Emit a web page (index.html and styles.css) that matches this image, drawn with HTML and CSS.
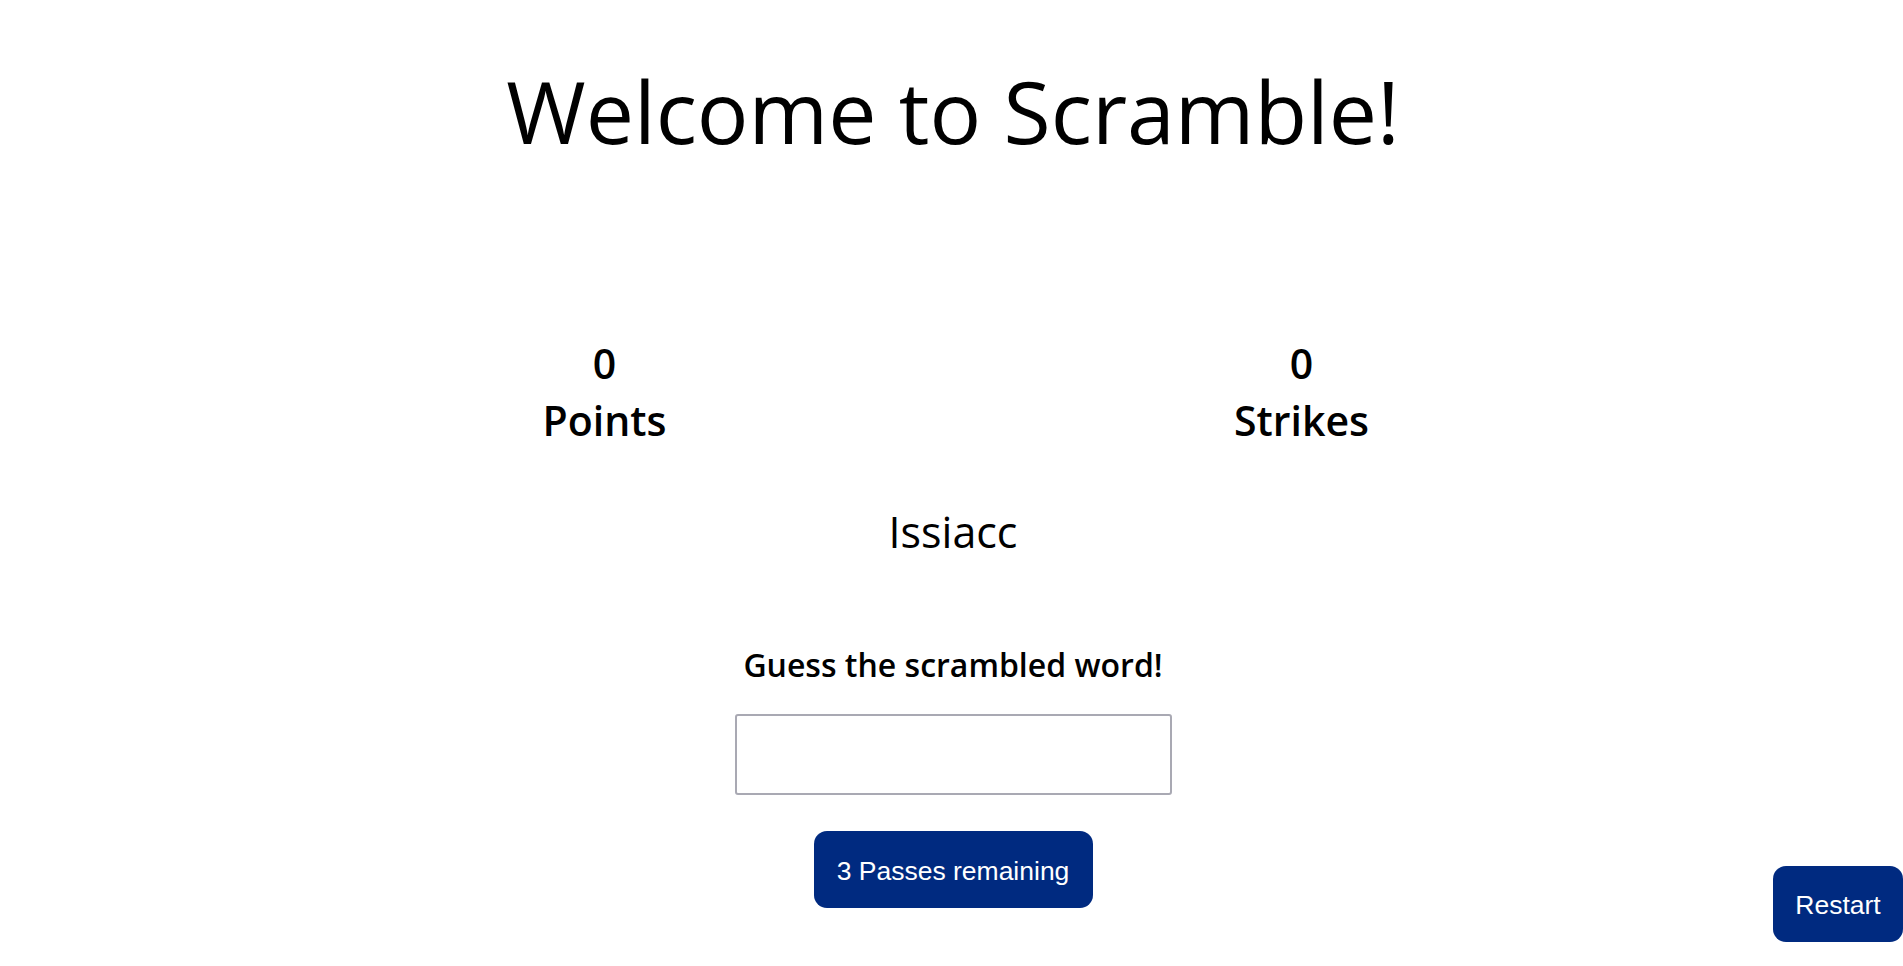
FILE: index.html
```html
<!DOCTYPE html>
<html lang="en">
<head>
<meta charset="utf-8">
<title>Scramble</title>
<link rel="stylesheet" href="styles.css">
</head>
<body>
<main class="game">
  <h1 class="title">Welcome to Scramble!</h1>
  <section class="stats">
    <div class="stat">
      <span class="stat-value">0</span>
      <span class="stat-label">Points</span>
    </div>
    <div class="stat">
      <span class="stat-value">0</span>
      <span class="stat-label">Strikes</span>
    </div>
  </section>
  <p class="scrambled">Issiacc</p>
  <form class="guess-form">
    <label class="guess-label" for="guess">Guess the scrambled word!</label>
    <input class="guess-input" id="guess" type="text">
  </form>
  <button class="btn btn-pass" type="button">3 Passes remaining</button>
</main>
<button class="btn btn-restart" type="button">Restart</button>
</body>
</html>
```
FILE: styles.css
```css
html, body {
  margin: 0;
  padding: 0;
  background: #ffffff;
}

body {
  font-family: "Open Sans", "Noto Sans", sans-serif;
  color: #000000;
}

.game {
  display: flex;
  flex-direction: column;
  align-items: center;
  padding-left: 3px;
}

.title {
  margin: 61px 0 0;
  font-size: 86px;
  font-weight: 400;
  line-height: 100px;
}

.stats {
  margin-top: 174px;
  width: 1394px;
  display: grid;
  grid-template-columns: 1fr 1fr;
}

.stat {
  display: flex;
  flex-direction: column;
  align-items: center;
}

.stat-value,
.stat-label {
  font-size: 41px;
  font-weight: 600;
  line-height: 57px;
}

.scrambled {
  margin: 55px 0 0;
  font-size: 43px;
  font-weight: 500;
  line-height: 56px;
}

.guess-form {
  margin-top: 83px;
  display: flex;
  flex-direction: column;
  align-items: center;
  gap: 27px;
}

.guess-label {
  font-size: 32px;
  font-weight: 600;
  line-height: 44px;
}

.guess-input {
  box-sizing: border-box;
  width: 437px;
  height: 81px;
  margin: 0;
  border: 2px solid #a9a9b3;
  border-radius: 3px;
  background: #ffffff;
  font-family: "Liberation Sans", sans-serif;
  font-size: 26px;
  padding: 0 12px;
}

.btn {
  box-sizing: border-box;
  border: none;
  background: #002a80;
  color: #ffffff;
  font-family: "Liberation Sans", Arial, sans-serif;
  font-size: 26.5px;
  padding: 3px 0 0;
  border-radius: 13px;
  cursor: pointer;
}

.btn-pass {
  margin-top: 36px;
  width: 279px;
  height: 77px;
}

.btn-restart {
  position: fixed;
  right: 0;
  bottom: 24px;
  width: 130px;
  height: 76px;
}
```
